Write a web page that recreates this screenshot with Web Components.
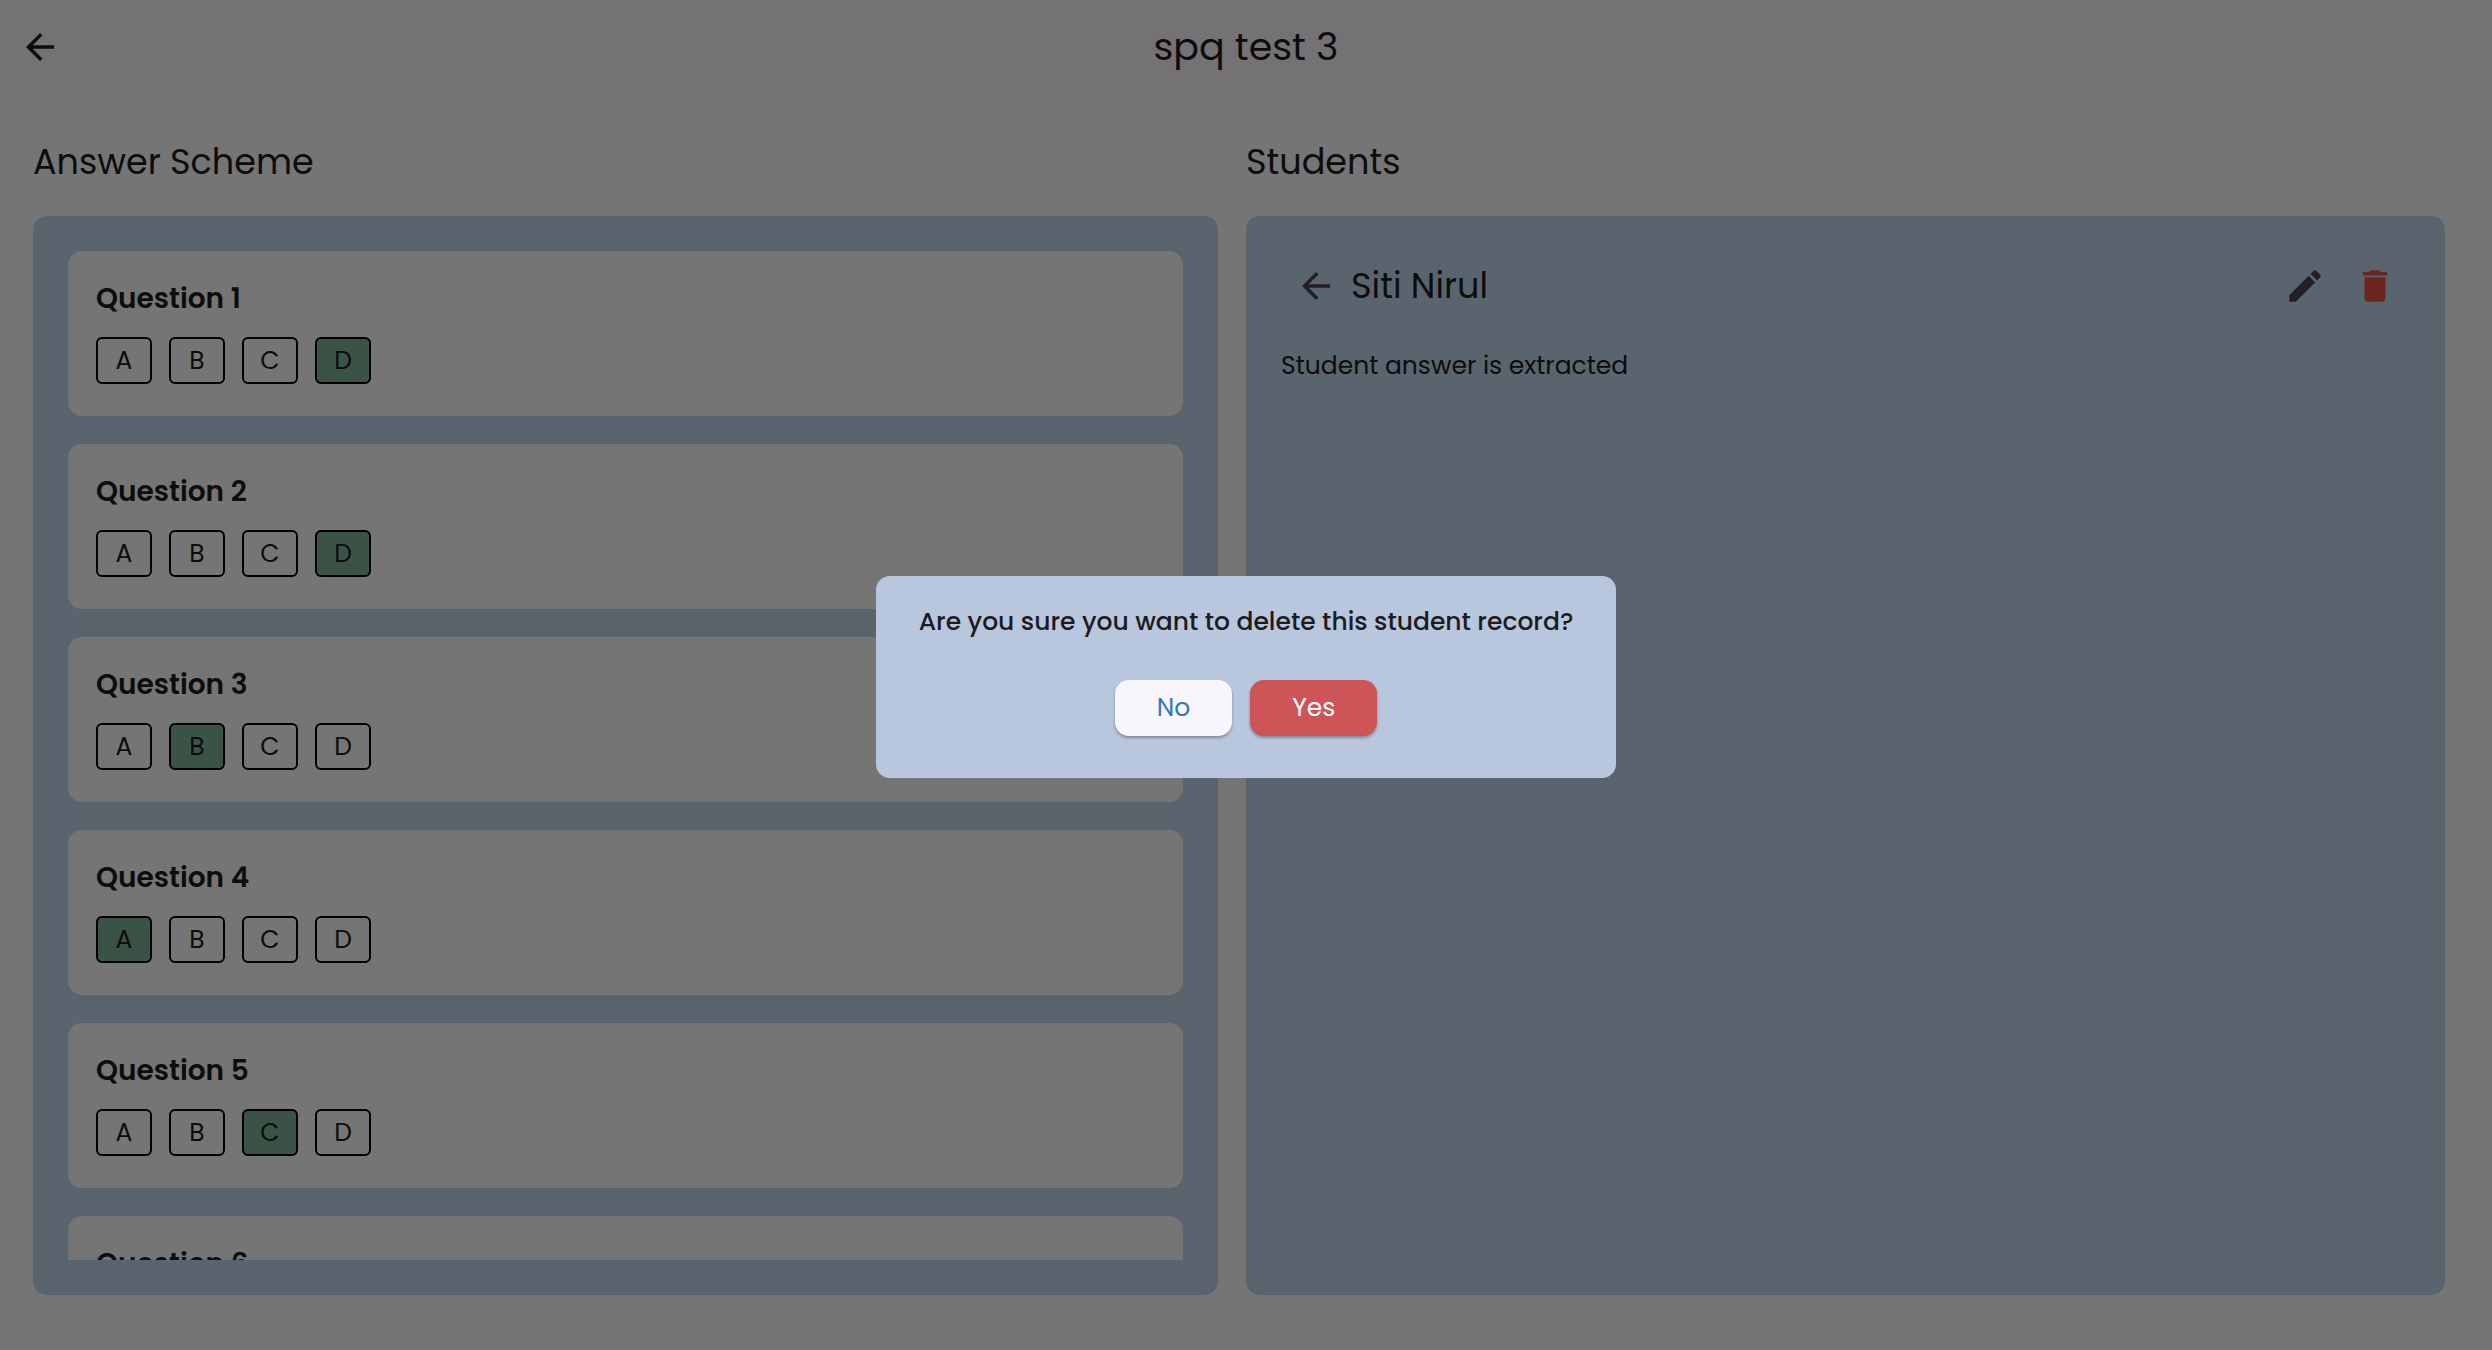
<!DOCTYPE html>
<html lang="en">
<head>
<meta charset="utf-8">
<title>spq test 3</title>
<style>
html, body { margin: 0; height: 100%; }
body {
  font-family: Poppins, Inter, "Liberation Sans", sans-serif;
  font-weight: 400;
  color: #1d1b20;
  background: #fefefe;
  overflow: hidden;
}
</style>
</head>
<body>
<exam-page>
  <app-header slot="header">spq test 3</app-header>
  <section-panel slot="left" heading="Answer Scheme">
    <answer-list>
      <question-card number="1" answer="D"></question-card>
      <question-card number="2" answer="D"></question-card>
      <question-card number="3" answer="B"></question-card>
      <question-card number="4" answer="A"></question-card>
      <question-card number="5" answer="C"></question-card>
      <question-card number="6"></question-card>
    </answer-list>
  </section-panel>
  <section-panel slot="right" heading="Students">
    <student-record name="Siti Nirul">Student answer is extracted</student-record>
  </section-panel>
</exam-page>
<confirm-dialog>Are you sure you want to delete this student record?</confirm-dialog>

<script>
const define = (name, render) => customElements.define(name, class extends HTMLElement {
  connectedCallback() {
    if (this.shadowRoot) return;
    this.attachShadow({ mode: "open" }).innerHTML = render(this);
  }
});

const ICONS = {
  back: "M20 11H7.83l5.59-5.59L12 4l-8 8 8 8 1.41-1.41L7.83 13H20v-2z",
  edit: "M3 17.25V21h3.75L17.81 9.94l-3.75-3.75L3 17.25zM20.71 7.04a1 1 0 0 0 0-1.41l-2.34-2.34a1 1 0 0 0-1.41 0l-1.83 1.83 3.75 3.75 1.83-1.83z",
  trash: "M6 19c0 1.1.9 2 2 2h8c1.1 0 2-.9 2-2V7H6v12zM19 4h-3.5l-1-1h-5l-1 1H5v2h14V4z"
};

define("icon-button", el => `
  <style>
    :host { display: block; }
    button { display: grid; place-items: center; width: 70px; height: 70px; padding: 0; border: 0; background: none; color: inherit; cursor: pointer; }
    svg { width: 42px; height: 42px; fill: currentColor; }
  </style>
  <button type="button" aria-label="${el.getAttribute("label")}">
    <svg viewBox="0 0 24 24" aria-hidden="true"><path d="${ICONS[el.getAttribute("icon")]}"/></svg>
  </button>`);

define("app-header", () => `
  <style>
    :host { display: block; background: #fef8ff; }
    header { display: grid; grid-template-columns: 70px 1fr 70px; align-items: center; height: 96px; padding: 0 5px 2px; box-sizing: border-box; }
    h1 { margin: 0; font-size: 38px; line-height: 52px; font-weight: 400; text-align: center; }
  </style>
  <header>
    <icon-button icon="back" label="Back"></icon-button>
    <h1><slot></slot></h1>
  </header>`);

define("exam-page", () => `
  <style>
    :host { display: flex; flex-direction: column; height: 100vh; }
    main { flex: 1; min-height: 0; display: grid; grid-template-columns: 1fr 1fr; padding-bottom: 55px; }
    div { display: flex; min-width: 0; min-height: 0; }
    .left { padding: 0 28px 0 33px; }
    .right { padding-right: 47px; }
    ::slotted(section-panel) { flex: 1; min-width: 0; }
  </style>
  <slot name="header"></slot>
  <main>
    <div class="left"><slot name="left"></slot></div>
    <div class="right"><slot name="right"></slot></div>
  </main>`);

define("section-panel", el => `
  <style>
    :host { display: flex; flex-direction: column; min-height: 0; }
    h2 { margin: 40px 0 28px; font-size: 35px; line-height: 52px; font-weight: 400; }
    section { flex: 1; min-height: 0; display: flex; flex-direction: column; padding: 35px; border-radius: 14px; background: #c5daef; }
  </style>
  <h2>${el.getAttribute("heading")}</h2>
  <section><slot></slot></section>`);

define("answer-list", () => `
  <style>
    :host { flex: 1; min-height: 0; display: flex; flex-direction: column; gap: 28px; overflow: hidden; }
    ::slotted(*) { flex: none; }
  </style>
  <slot></slot>`);

define("question-card", el => `
  <style>
    :host { display: block; padding: 28px 28px 32px; border-radius: 14px; background: #fefefe; }
    h3 { margin: 0 0 18px; font-size: 28px; line-height: 40px; font-weight: 600; }
    div { display: flex; gap: 17px; }
    button { width: 56px; height: 47px; padding: 0; border: 2px solid #000; border-radius: 6px; background: none; font: inherit; font-size: 25px; line-height: 36px; color: inherit; }
    button[aria-pressed="true"] { background: #82b698; }
  </style>
  <h3>Question ${el.getAttribute("number")}</h3>
  <div>${["A", "B", "C", "D"].map(l =>
    `<button type="button" aria-pressed="${l === el.getAttribute("answer")}">${l}</button>`).join("")}</div>`);

define("student-record", el => `
  <style>
    :host { display: block; }
    header { display: flex; align-items: center; }
    h3 { flex: 1; margin: 0; font-size: 35px; line-height: 52px; font-weight: 400; }
    p { margin: 27px 0 0; font-size: 25px; line-height: 36px; }
    .back { color: #49454f; }
    .edit { color: #4b474f; }
    .delete { color: #ee5444; }
  </style>
  <header>
    <icon-button class="back" icon="back" label="Back to students"></icon-button>
    <h3>${el.getAttribute("name")}</h3>
    <icon-button class="edit" icon="edit" label="Edit student"></icon-button>
    <icon-button class="delete" icon="trash" label="Delete student"></icon-button>
  </header>
  <p><slot></slot></p>`);

define("confirm-dialog", () => `
  <style>
    :host { position: fixed; inset: 0; display: grid; place-items: center; padding-top: 4px; background: rgba(0, 0, 0, .54); }
    dialog { position: static; box-sizing: border-box; min-width: 740px; margin: 0; padding: 28px 42px 42px; border: 0; border-radius: 14px; background: #b8c6de; color: #1d1b20; text-align: center; }
    p { margin: 0 0 40px; font-size: 25px; line-height: 36px; font-weight: 500; }
    div { display: flex; justify-content: center; gap: 18px; }
    button { height: 56px; padding: 0 42px; border: 0; border-radius: 14px; font: inherit; font-size: 25px; box-shadow: 0 2px 3px rgba(0, 0, 0, .3); }
    .no { background: #f7f6fc; color: #3678b6; }
    .yes { background: #cd5558; color: #fff; }
  </style>
  <dialog open aria-modal="true" aria-labelledby="q">
    <p id="q"><slot></slot></p>
    <div>
      <button type="button" class="no">No</button>
      <button type="button" class="yes">Yes</button>
    </div>
  </dialog>`);
</script>
</body>
</html>
